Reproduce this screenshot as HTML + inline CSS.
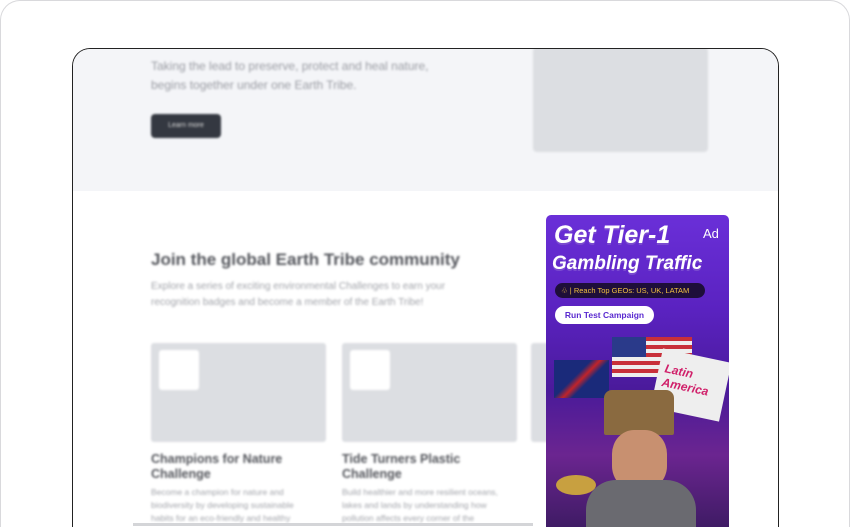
<!DOCTYPE html>
<html><head><style>
*{margin:0;padding:0;box-sizing:border-box}
html,body{width:850px;height:527px;overflow:hidden}
body{background:#fff;font-family:"Liberation Sans",sans-serif;position:relative}
.outer{position:absolute;left:0;top:0;width:850px;height:527px;border:1px solid #d9d9dc;border-bottom:none;border-radius:20px 20px 0 0}
.frame{position:absolute;left:72px;top:48px;width:707px;height:479px;border:1px solid #222;border-bottom:none;border-radius:18px 18px 0 0;overflow:hidden;background:#fff}
.top{position:absolute;left:0;top:0;width:100%;height:142px;background:#f4f5f8}
.blur{filter:blur(1px)}
.t{position:absolute;color:#9a9ca3;font-size:12px;line-height:19px}
.card{position:absolute;top:294px;width:175px;height:99px;background:#dcdee2;border-radius:3px}
.sq{position:absolute;left:8px;top:7px;width:40px;height:40px;background:#fff;border-radius:3px}
.ct{position:absolute;top:403px;font-weight:bold;font-size:12.5px;color:#55575d;line-height:15px}
.cd{position:absolute;top:437px;font-size:8.5px;color:#a3a5ab;line-height:13px}
.ad{position:absolute;left:546px;top:215px;width:183px;height:320px;border-radius:5px;overflow:hidden;background:linear-gradient(180deg,#6a2fd8 0%,#5a22c0 30%,#4a1a9a 55%,#6b2590 75%,#3a1a60 100%)}
</style></head><body>
<div class="outer"></div>
<div class="frame">
 <div class="top"></div>
 <div class="blur">
 <div class="t" style="left:78px;top:8px">Taking the lead to preserve, protect and heal nature,<br>begins together under one Earth Tribe.</div>
 <div style="position:absolute;left:78px;top:65px;width:70px;height:24px;background:#343841;border-radius:4px;color:#ddd;font-size:7px;text-align:center;line-height:24px">Learn more</div>
 <div style="position:absolute;left:460px;top:-2px;width:175px;height:105px;background:#dcdee2;border-radius:4px"></div>
 <div style="position:absolute;left:78px;top:201px;font-size:17px;font-weight:bold;color:#55575d">Join the global Earth Tribe community</div>
 <div class="t" style="left:78px;top:230px;font-size:10px;line-height:16px;color:#a3a5ab">Explore a series of exciting environmental Challenges to earn your<br>recognition badges and become a member of the Earth Tribe!</div>
 <div class="card" style="left:78px"><div class="sq"></div></div>
 <div class="card" style="left:269px"><div class="sq"></div></div>
 <div class="card" style="left:458px;width:20px"></div>
 <div class="ct" style="left:78px">Champions for Nature<br>Challenge</div>
 <div class="ct" style="left:269px">Tide Turners Plastic<br>Challenge</div>
 <div class="cd" style="left:78px">Become a champion for nature and<br>biodiversity by developing sustainable<br>habits for an eco-friendly and healthy</div>
 <div class="cd" style="left:269px">Build healthier and more resilient oceans,<br>lakes and lands by understanding how<br>pollution affects every corner of the</div>
 </div>
 <div style="position:absolute;left:60px;top:474px;width:400px;height:3px;background:#d4d5d8"></div>
</div>
<div class="ad">
 <div style="position:absolute;left:8px;top:6px;font-size:25px;font-weight:bold;font-style:italic;color:#fff;text-shadow:0 2px 0 #7a4ad0">Get Tier-1</div>
 <div style="position:absolute;left:157px;top:11px;font-size:13px;color:#fff">Ad</div>
 <div style="position:absolute;left:6px;top:38px;font-size:19px;font-weight:bold;font-style:italic;color:#fff;text-shadow:0 2px 0 #7a4ad0">Gambling Traffic</div>
 <div style="position:absolute;left:9px;top:68px;width:150px;height:15px;background:#1e0e3a;border-radius:8px;color:#f0c040;font-size:7.5px;line-height:15px;padding-left:6px;white-space:nowrap">♧ | Reach Top GEOs: US, UK, LATAM</div>
 <div style="position:absolute;left:9px;top:91px;width:99px;height:18px;background:#fff;border-radius:9px;color:#5a2ad0;font-size:8.5px;font-weight:bold;line-height:18px;text-align:center">Run Test Campaign</div>
 <div style="position:absolute;left:8px;top:145px;width:55px;height:38px;background:linear-gradient(135deg,#1a2a7a 40%,#c0242a 50%,#1a2a7a 60%)"></div>
 <div style="position:absolute;left:66px;top:122px;width:80px;height:40px;background:repeating-linear-gradient(180deg,#c8303a 0 4px,#eee 4px 8px)"></div>
 <div style="position:absolute;left:66px;top:122px;width:34px;height:20px;background:#2a3a8a"></div>
 <div style="position:absolute;left:110px;top:140px;width:70px;height:60px;background:#eee;transform:rotate(12deg);color:#d0206a;font-weight:bold;font-style:italic;font-size:12px;padding:12px 6px">Latin<br>America</div>
 <div style="position:absolute;left:58px;top:175px;width:70px;height:45px;background:#8a6a40;border-radius:8px 8px 2px 2px"></div>
 <div style="position:absolute;left:66px;top:215px;width:55px;height:60px;background:#c89070;border-radius:40%"></div>
 <div style="position:absolute;left:40px;top:265px;width:110px;height:60px;background:#6a6a70;border-radius:30px 30px 0 0"></div>
 <div style="position:absolute;left:10px;top:260px;width:40px;height:20px;background:#c8a040;border-radius:50%"></div>
</div>
</body></html>
